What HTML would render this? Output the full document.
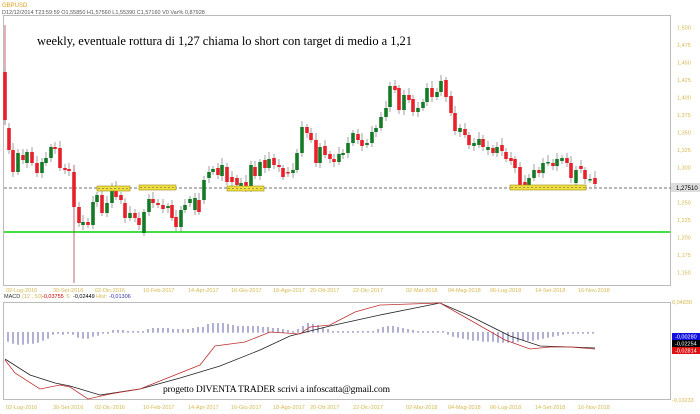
<!DOCTYPE html>
<html><head><meta charset="utf-8"><style>
body{margin:0;background:#fff;width:700px;height:414px;overflow:hidden}
svg{display:block}
.ax{font-family:"Liberation Sans",sans-serif;font-size:5.5px;fill:#d8b850}
</style></head><body>
<svg id="s" width="700" height="414" xmlns="http://www.w3.org/2000/svg">
<text x="2" y="7" style="font-family:'Liberation Sans',sans-serif;font-size:6px;fill:#e0a020">GBPUSD</text>
<text x="2" y="14" style="font-family:'Liberation Sans',sans-serif;font-size:5.5px;fill:#555">D12/12/2014  T23:59:59  O1,55850  H1,57560  L1,55390  C1,57160  V0  Var% 0,87928</text>
<rect x="3.5" y="15.5" width="667" height="270" fill="none" stroke="#bbb"/>
<rect x="3.5" y="302.5" width="667" height="97" fill="none" stroke="#bbb"/>
<line x1="4" y1="188" x2="700" y2="188" stroke="#444" stroke-dasharray="3,2" stroke-width="0.8"/>
<line x1="4" y1="232" x2="670" y2="232" stroke="#44dd44" stroke-width="2"/>
<g id="c"></g>
<rect x="97" y="186" width="33" height="5" fill="#f0e040" stroke="#9a8a10" stroke-width="0.6"/>
<rect x="139" y="185" width="37" height="5" fill="#f0e040" stroke="#9a8a10" stroke-width="0.6"/>
<rect x="227" y="186" width="37" height="5" fill="#f0e040" stroke="#9a8a10" stroke-width="0.6"/>
<rect x="510" y="185" width="76" height="5" fill="#f0e040" stroke="#9a8a10" stroke-width="0.6"/>
<g stroke="#555" stroke-dasharray="2,2" stroke-width="0.5"><line x1="98" y1="188.5" x2="129" y2="188.5"/><line x1="140" y1="187.5" x2="175" y2="187.5"/><line x1="228" y1="188.5" x2="263" y2="188.5"/><line x1="511" y1="187.5" x2="585" y2="187.5"/></g>
<text x="37" y="45" textLength="375" style="font-family:'Liberation Serif',serif;font-size:12.5px;fill:#000">weekly, eventuale rottura di 1,27 chiama lo short con target di medio a 1,21</text>
<g id="ax" class="ax"></g>
<rect x="671" y="183" width="29" height="9" fill="#ddd"/>
<text x="676" y="190" style="font-family:'Liberation Sans',sans-serif;font-size:6px;fill:#000">1,27510</text>
<text x="4" y="298" class="ax" style="fill:#333">MACD</text>
<text x="22" y="298" class="ax">(12 , 50)</text>
<text x="42" y="298" class="ax" style="fill:#c00">-0,03755</text>
<text x="66" y="298" class="ax">S</text>
<text x="73" y="298" class="ax" style="fill:#000">-0,02449</text>
<text x="96" y="298" class="ax">Hist:</text>
<text x="109" y="298" class="ax" style="fill:#33a">-0,01306</text>
<text x="672" y="304" class="ax">0,04830</text>
<text x="672" y="402" class="ax">-0,10233</text>
<rect x="672" y="333" width="28" height="7" fill="#1010e0"/><text x="675" y="338.5" class="ax" style="fill:#fff">-0,00280</text>
<rect x="672" y="340" width="28" height="7" fill="#000"/><text x="675" y="345.5" class="ax" style="fill:#fff">-0,02254</text>
<rect x="672" y="347" width="28" height="7" fill="#e01010"/><text x="675" y="352.5" class="ax" style="fill:#fff">-0,02814</text>
<g id="h"></g>
<polyline fill="none" stroke="#222" stroke-width="0.8" points="5,359 30,375 55,383 70,386 100,395 140,389 180,378 220,366 260,350 290,336 330,326 380,315 440,303 470,316 510,336 540,346 570,347 595,348"/>
<polyline fill="none" stroke="#c03030" stroke-width="0.8" points="5,360 15,373 40,389 60,385 70,387 88,399 110,394 140,389 170,377 200,365 215,346 245,342 270,332 300,334 310,327 330,325 355,312 380,305 440,303 470,320 505,340 530,349 550,347 570,347 595,349"/>
<text x="163" y="392" textLength="227" style="font-family:'Liberation Serif',serif;font-size:9.5px;fill:#000">progetto DIVENTA TRADER scrivi a infoscatta@gmail.com</text>
</svg>
<script>
var NS="http://www.w3.org/2000/svg";
function el(p,t,a){var e=document.createElementNS(NS,t);for(var k in a)e.setAttribute(k,a[k]);p.appendChild(e);return e;}
var c=[[5,72,120,'r'],[9,128,150,'r'],[13,150,172,'r'],[18,153,172,'g'],[23,155,160,'r'],[27,152,163,'g'],[32,152,163,'r'],[37,163,173,'r'],[42,162,173,'g'],[46,158,163,'g'],[51,147,158,'g'],[55,147,149,'r'],[60,148,168,'r'],[65,168,170,'r'],[69,169,171,'r'],[74,172,207,'r'],[79,207,223,'r'],[83,222,225,'g'],[88,222,225,'r'],[93,202,225,'g'],[97,195,202,'g'],[102,195,213,'r'],[107,203,213,'g'],[112,187,203,'g'],[116,187,197,'r'],[121,195,200,'r'],[125,203,218,'r'],[130,213,218,'g'],[135,213,218,'r'],[139,218,225,'r'],[144,212,233,'g'],[149,199,212,'g'],[153,199,203,'r'],[158,203,205,'r'],[163,205,209,'r'],[168,206,208,'g'],[172,205,218,'r'],[176,217,227,'r'],[181,210,227,'g'],[185,205,210,'g'],[190,199,203,'g'],[195,198,210,'g'],[199,200,212,'r'],[204,180,200,'g'],[209,172,178,'g'],[213,169,172,'g'],[218,168,175,'r'],[222,165,176,'g'],[227,167,182,'r'],[232,177,182,'r'],[237,178,185,'r'],[241,183,187,'g'],[246,182,188,'r'],[251,165,187,'g'],[255,167,176,'r'],[260,162,176,'g'],[265,160,168,'r'],[269,159,168,'g'],[274,158,165,'r'],[279,165,167,'r'],[283,168,177,'r'],[288,172,173,'r'],[293,170,173,'g'],[297,153,170,'g'],[302,127,153,'g'],[307,127,133,'r'],[311,133,140,'r'],[316,140,163,'r'],[320,147,163,'g'],[325,146,155,'r'],[330,154,159,'r'],[334,159,162,'r'],[339,154,162,'g'],[343,153,155,'g'],[348,143,153,'g'],[353,133,143,'g'],[358,134,140,'r'],[362,140,146,'r'],[367,143,145,'g'],[372,132,143,'g'],[376,128,132,'g'],[381,117,128,'g'],[386,108,117,'g'],[390,86,107,'g'],[395,86,90,'r'],[399,88,110,'r'],[404,95,110,'g'],[409,95,100,'r'],[413,99,112,'r'],[418,108,112,'g'],[423,102,108,'g'],[427,88,102,'g'],[432,88,97,'r'],[437,92,97,'g'],[441,81,92,'g'],[446,80,97,'r'],[451,96,113,'r'],[455,113,131,'r'],[460,128,132,'g'],[465,129,135,'r'],[469,135,145,'r'],[474,143,146,'g'],[479,139,145,'g'],[483,139,147,'r'],[488,147,150,'g'],[493,148,153,'r'],[497,147,153,'g'],[502,145,151,'r'],[506,152,159,'r'],[511,158,161,'r'],[515,159,168,'r'],[520,167,185,'r'],[525,182,185,'r'],[529,178,185,'g'],[534,170,178,'g'],[539,170,173,'r'],[543,163,173,'g'],[548,162,163,'g'],[553,163,166,'r'],[557,159,166,'g'],[562,158,161,'g'],[567,158,163,'r'],[571,163,178,'r'],[576,170,183,'g'],[581,166,169,'r'],[585,170,179,'r'],[590,179,180,'g'],[595,178,184,'r']];
var g=document.getElementById('c');
el(g,'line',{x1:5,y1:25,x2:5,y2:125,stroke:'#b04050','stroke-width':0.8});
el(g,'line',{x1:74,y1:165,x2:74,y2:283,stroke:'#b04050','stroke-width':0.8});
c.forEach(function(d,i){var col=d[3]=='r'?'#e8202a':'#157a25';var w=3+((i*7)%5);
el(g,'line',{x1:d[0],y1:d[1]-w,x2:d[0],y2:d[2]+3+(i%3),stroke:'#777','stroke-width':0.7});
el(g,'rect',{x:d[0]-1.8,y:d[1],width:3.6,height:Math.max(1.5,d[2]-d[1]),fill:col});});
var ax=document.getElementById('ax');
var lab=['1,500','1,475','1,450','1,425','1,400','1,375','1,350','1,325','1,300','','1,250','1,225','1,200','1,175','1,150'];
lab.forEach(function(t,i){if(t){var e=el(ax,'text',{x:677,y:29.5+i*17.5});e.textContent=t;}});
var ds=[[8,'02-Lug-2016'],[55,'30-Set-2016'],[97,'02-Dic-2016'],[145,'10-Feb-2017'],[190,'14-Apr-2017'],[233,'16-Giu-2017'],[275,'18-Ago-2017'],[312,'20-Ott-2017'],[355,'22-Dic-2017'],[408,'02-Mar-2018'],[450,'04-Mag-2018'],[492,'06-Lug-2018'],[537,'14-Set-2018'],[580,'16-Nov-2018']];
ds.forEach(function(d){var e=el(ax,'text',{x:d[0]-2,y:292});e.textContent=d[1];e=el(ax,'text',{x:d[0]-2,y:409});e.textContent=d[1];});
var h=document.getElementById('h');
var hv=[[8,-9],[13,-11],[18,-12],[23,-12],[28,-11],[33,-11],[38,-10],[43,-8],[48,-6],[53,-2],[58,-1],[63,-2],[68,-1],[73,-2],[78,-5],[83,-6],[88,-6],[93,-4],[98,-3],[103,-1],[108,-1],[113,2],[118,2],[123,2],[128,1],[133,1],[138,1],[143,1],[148,3],[153,4],[158,4],[163,4],[168,4],[173,3],[178,3],[183,3],[188,3],[193,4],[198,5],[203,5],[208,8],[213,9],[218,9],[223,9],[228,8],[233,7],[238,6],[243,6],[248,6],[253,6],[258,6],[263,5],[268,5],[273,4],[278,4],[283,3],[288,2],[293,1],[298,3],[303,6],[308,9],[313,8],[318,7],[323,5],[328,3],[333,1],[338,1],[343,1],[348,1],[353,1],[358,1],[363,1],[368,1],[373,1],[378,3],[383,5],[388,6],[393,6],[398,5],[403,4],[408,3],[413,2],[418,1],[423,1],[428,1],[433,1],[438,1],[443,1],[448,-2],[453,-4],[458,-5],[463,-6],[468,-7],[473,-8],[478,-8],[483,-9],[488,-9],[493,-9],[498,-10],[503,-10],[508,-10],[513,-10],[518,-9],[523,-8],[528,-8],[533,-8],[538,-7],[543,-6],[548,-5],[553,-4],[558,-3],[563,-2],[568,-1],[573,-1],[578,-1],[583,-1],[588,-1],[593,-1]];
hv.forEach(function(d){var y=332;el(h,'line',{x1:d[0],y1:Math.min(y,y-d[1]),x2:d[0],y2:Math.max(y,y-d[1])+0.8,stroke:'#5050a0','stroke-width':0.9});});
</script>
</body></html>
